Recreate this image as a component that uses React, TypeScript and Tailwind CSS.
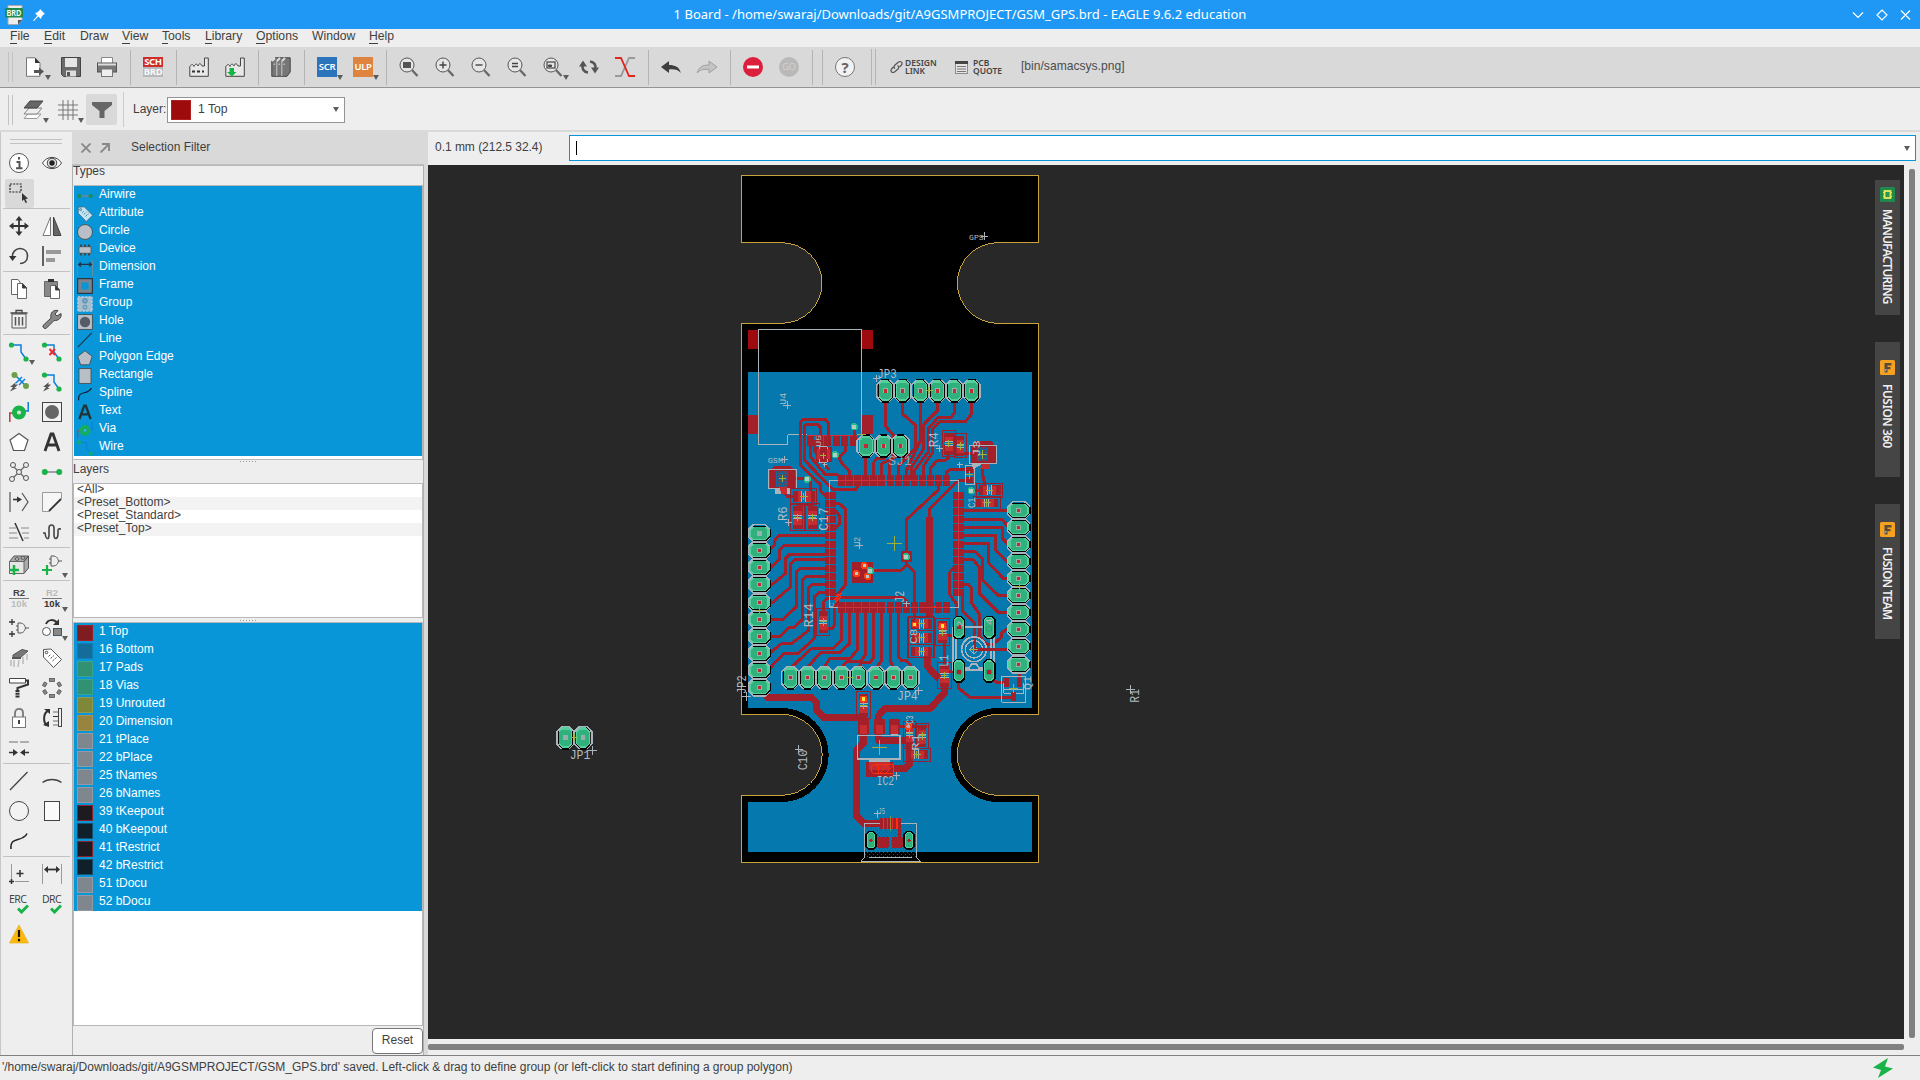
import React from "react";

type Kids = { children?: React.ReactNode };

/* ---------- icon helpers ---------- */

function Ico({ children, size = 20 }: Kids & { size?: number }) {
  return (
    <svg width={size} height={size} viewBox="0 0 20 20" fill="none" stroke="#444" strokeWidth="1" className="block shrink-0 overflow-visible">
      {children}
    </svg>
  );
}

function Tri({ className = "" }: { className?: string }) {
  return (
    <svg width="6" height="5" viewBox="0 0 6 5" className={className}>
      <path d="M0 0H6L3 5Z" fill="#5c5c5c" />
    </svg>
  );
}

function Drop({ children }: Kids) {
  return (
    <div className="relative">
      {children}
      <Tri className="absolute -right-[6px] -bottom-[3px]" />
    </div>
  );
}

function Lens({ children }: Kids) {
  return (
    <Ico>
      <circle cx="8" cy="8" r="7" stroke="#555" fill="#e6e6e6" />
      <path d="M13.2 13.2L18.5 19" stroke="#666" strokeWidth="2.2" />
      {children}
    </Ico>
  );
}

const G = "#19b34a";
const B = "#0b7fdc";

/* ---------- top toolbar icons ---------- */

const iNew = <Ico><path d="M1.5 .8H10L15 6V19.3H1.5Z" fill="#fff" stroke="#777" /><path d="M10 .8V6H15Z" fill="#333" stroke="none" /><path d="M9 13h5v-2.600l5 4-5 4V16H9Z" fill="#555" stroke="none" /></Ico>;
const iSave = <Ico><path d="M.5 .5H19.500V19.500H2.500L.5 17.500Z" fill="#6b6b6b" stroke="#444" /><rect x="4" y="1" width="12" height="9" fill="#e6e6e6" stroke="none" /><rect x="5" y="13.500" width="10" height="6" fill="#ddd" stroke="none" /><rect x="6" y="15" width="3" height="4" fill="#555" stroke="none" /></Ico>;
const iPrint = <Ico><path d="M4.500 6V.5h11V6" fill="#fff" stroke="#888" /><rect x=".5" y="6" width="19" height="9" fill="#777" stroke="#555" /><path d="M1 7.500H19" stroke="#ddd" strokeWidth="2" /><rect x="4.500" y="12" width="11" height="7.500" fill="#eee" stroke="#777" /></Ico>;
const iSch = (
  <div className="h-5 w-5 bg-[#b9b9b9] font-['Noto_Sans'] text-[9.500px] leading-[10px] font-bold tracking-[-0.3px] text-[#fafafa]">
    <div className="h-[10px] bg-[#cf2d2a] text-center">SCH</div>
    <div className="h-[10px] text-center">BRD</div>
  </div>
);
const fac = "M.8 19.300V9.500C2.500 7 4 7 5 9.500C6 6.500 8 6.500 9 9C10 6 11.500 6 13 9L15.500 9V1H19.300V19.300Z";
const iFac1 = <Ico><path d={fac} fill="#e8e8e8" stroke="#444" /><path d="M3 14.500H15" stroke="#333" strokeWidth="2" strokeDasharray="3 2" /></Ico>;
const iFac2 = <Ico><path d={fac} fill="#e8e8e8" stroke="#444" /><path d="M4.500 11h4.500v4h2.500L6.800 19.500 2 15h2.500Z" fill="#12b545" stroke="none" /></Ico>;
const iBooks = <Ico><path d="M.8 4L4 .8H19.200V15L16 19.300H.8Z" fill="#777" stroke="#444" /><path d="M1 4L4 1M6 4L9 1M11 4L14 1" stroke="#ddd" strokeWidth="2" /><path d="M5.800 4V19M10.800 4V19" stroke="#ccc" /><path d="M3.200 6.500V8M8.200 6.500V8M13.200 6.500V8" stroke="#ddd" /></Ico>;
const tag = (bg: string, t: string) => (
  <div className={"flex h-5 w-5 items-center justify-center font-['Noto_Sans'] text-[9.500px] font-semibold tracking-[-0.3px] text-white " + bg}>{t}</div>
);
const iRefresh = <Ico><path d="M9 15.500C4.500 15 2.500 11.500 3.800 7.500" stroke="#555" strokeWidth="2.600" /><path d="M0 9.500L4 3.500L8 9.500Z" fill="#555" stroke="none" /><path d="M11 4.500C15.500 5 17.500 8.500 16.200 12.500" stroke="#555" strokeWidth="2.600" /><path d="M20 10.500L16 16.500L12 10.500Z" fill="#555" stroke="none" /></Ico>;
const iRats = <Ico><path d="M20 1H14L6 19H0" stroke="#999" strokeWidth="1.800" /><path d="M0 1H6L14 19H20" stroke="#e0261c" strokeWidth="1.800" /></Ico>;
const arrowD = "M0 10L8 4V8C14 8 18.500 10 19.800 16C17 12.500 13 12 8 12.500V16Z";
const iUndo = <Ico><path d={arrowD} fill="#3f3f3f" stroke="none" /></Ico>;
const iRedo = <Ico><path d={arrowD} transform="translate(20 0) scale(-1 1)" fill="#c4c4c4" stroke="#a0a0a0" /></Ico>;
const iStop = <Ico><circle cx="10" cy="10" r="10" fill="#dd1f3e" stroke="none" /><path d="M4 10H16" stroke="#fff" strokeWidth="3" /></Ico>;
const iGo = <div className="flex h-5 w-5 items-center justify-center rounded-full bg-[#b9b9b9] font-['Noto_Sans'] text-[9px] text-[#d3d3d3]">GO</div>;
const iHelp = <div className="flex h-5 w-5 items-center justify-center rounded-full border border-[#777] bg-[#f2f2f2] font-['Noto_Sans'] text-[15px] font-bold text-[#666]">?</div>;

const topGroups: React.ReactNode[][] = [
  [<Drop>{iNew}</Drop>, iSave, iPrint],
  [iSch],
  [iFac1, iFac2],
  [iBooks],
  [<Drop>{tag("bg-[#2b73bb]", "SCR")}</Drop>, <Drop>{tag("bg-[#df843f]", "ULP")}</Drop>],
  [
    <Lens><rect x="4" y="5" width="8" height="6" fill="#555" stroke="none" /></Lens>,
    <Lens><path d="M4.500 8H11.500M8 4.500V11.500" strokeWidth="1.400" /></Lens>,
    <Lens><path d="M4.500 8H11.500" strokeWidth="1.400" /></Lens>,
    <Lens><path d="M5 6.500H11M5 9.500H11" strokeWidth="1.300" /></Lens>,
    <Drop><Lens><rect x="4" y="5" width="8" height="6" strokeWidth="1.200" /><path d="M5.500 8h3v1.500h-3z" fill="#555" /></Lens></Drop>,
    iRefresh,
    iRats,
  ],
  [iUndo, iRedo],
  [iStop, iGo],
];

const VSep = () => <div className="h-[35px] w-px shrink-0 bg-[#b4b4b4]" />;
const Grip = () => <div className="ml-2 h-[30px] w-[5px] shrink-0 border-x border-[#c2c2c2]" />;

function TopToolbar() {
  return (
    <div className="flex h-[41px] shrink-0 items-center border-b border-[#949494] bg-[#d9d9d9]">
      <Grip />
      {topGroups.map((g, i) => (
        <React.Fragment key={i}>
          <div className="mr-[13px] ml-3 flex gap-4">
            {g.map((n, j) => <React.Fragment key={j}>{n}</React.Fragment>)}
          </div>
          <VSep />
        </React.Fragment>
      ))}
      <div className="w-[9px]" />
      <VSep />
      <div className="mr-4 ml-3">{iHelp}</div>
      <div className="h-[36px] w-[5px] border-x border-[#b4b4b4]" />
      <div className="ml-[14px] flex items-center font-['Noto_Sans'] text-[8.500px] leading-[8px] font-semibold text-[#444]">
        <svg width="13" height="14" viewBox="0 0 13 14" fill="none" stroke="#555" strokeWidth="1.200">
          <path d="M5 8.500C3.500 7.500 4 6 5 5L8.500 2C11 .5 13 3 11.500 5L9.500 7M7.500 5.500C9 6.500 9 8 8 9L4.500 12C2 13.500 0 11 1.500 9L3.500 7" />
        </svg>
        <div className="ml-[2px] w-[50px]"><div>DESIGN</div><div>LINK</div></div>
        <svg width="13" height="13" viewBox="0 0 13 13"><path d="M0 0H13V13H0Z" fill="#8b8b8b" /><path d="M1 3H12V12H1Z" fill="#e4e4e4" /><path d="M0 0H13V3H0Z" fill="#444" /><path d="M2 5.500H11M2 8H11M2 10.500H11" stroke="#777" /></svg>
        <div className="ml-[5px] w-[48px]"><div>PCB</div><div>QUOTE</div></div>
      </div>
      <span className="pb-px text-[12.100px] text-[#4c4c4c]">[bin/samacsys.png]</span>
    </div>
  );
}

function LayerToolbar() {
  return (
    <div className="flex h-[44px] shrink-0 items-center border-b-2 border-[#d9d9d9] pt-px">
      <Grip />
      <div className="ml-[10px]">
        <Drop>
          <Ico>
            <path d="M1 18.500L5 14H18L14 18.500H1Z" fill="#fff" stroke="#999" />
            <path d="M1 14L6 8H19L14 14Z" fill="#eee" stroke="#888" />
            <path d="M1 8L7 1H20L14 8Z" fill="#666" stroke="#444" />
          </Ico>
        </Drop>
      </div>
      <div className="ml-[15px]">
        <Drop><Ico><path d="M5 0V20M10 0V20M15 0V20M0 5H20M0 10H20M0 15H20" stroke="#777" /></Ico></Drop>
      </div>
      <div className="ml-[8px] flex h-[31px] w-[31px] items-center justify-center rounded-[2px] bg-[#d9d9d9]">
        <svg width="20" height="16" viewBox="0 0 20 16"><path d="M0 0H20V3L12.500 9V16H7.500V9L0 3Z" fill="#666" /></svg>
      </div>
      <div className="ml-[6px] h-[35px] w-px bg-[#ccc]" />
      <span className="ml-[9px] w-[34px] pb-px text-[12px]">Layer:</span>
      <div className="flex h-[26px] w-[178px] items-center border border-[#949494] bg-white pr-[5px] pl-[3px]">
        <div className="h-5 w-5 border border-[#b02020] bg-[#9e0b0d]" />
        <span className="ml-[7px] flex-1 pb-px text-[12.200px]">1 Top</span>
        <Tri />
      </div>
    </div>
  );
}

/* ---------- left tool palette ---------- */

const Dot = ({ x, y, r = 2.600, f = G }: { x: number; y: number; r?: number; f?: string }) => <circle cx={x} cy={y} r={r} fill={f} stroke="none" />;
const bolt = "M7 10L1 15H4L1 19.500L8 16H5.500L9 12.500H6Z";
const viaArt = <><path d="M.8 20V11H6" stroke="#c4373a" strokeWidth="1.500" /><path d="M19.200 0V9H14" stroke={B} strokeWidth="1.500" /><circle cx="10" cy="10.500" r="4.500" stroke={G} strokeWidth="5" /><circle cx="10" cy="10.500" r="1" stroke="#b9dcc4" strokeWidth=".8" /></>;
const wireArt = <><path d="M2 3H12V10L17 17" stroke={B} strokeWidth="1.500" /><Dot x={2.500} y={3} /><Dot x={17} y={17} /></>;
const labelArt = <><path d="M1.500 1.500L9 1 19.500 11.500 11.500 19.500 1.500 9Z" fill="#fff" stroke="#555" /><circle cx="4.500" cy="4.500" r="1.300" fill="#eee" stroke="#555" /><path d="M6.500 8.500L9 6M8.500 10.500L12 7.500M10.500 13L14.500 9.500" stroke="#555" strokeDasharray="2.500 1" /></>;
const rText = (a: string, b: string) => (
  <div className="w-5 text-center text-[9.500px] leading-[10px] font-bold">
    <div className={a + " border-b border-[#777]"}>R2</div>
    <div className={b}>10k</div>
  </div>
);
const check = (t: string) => (
  <div className="relative h-5 w-5 font-['Noto_Sans'] text-[10.500px] leading-[11px] tracking-[-0.6px] text-[#444]">
    {t}
    <svg width="12" height="10" viewBox="0 0 12 10" className="absolute right-0 bottom-0"><path d="M1 4.500L4.500 8L11 1.500" fill="none" stroke={G} strokeWidth="3" /></svg>
  </div>
);
const gate = (x: number, y: number) => <path transform={`translate(${x} ${y})`} d="M2 0H4C8 0 9 3 9.500 5C9 7 8 10 4 10H2ZM9.500 5H13M0 3H2M0 7H2" stroke="#555" />;

const sections: React.ReactNode[][] = [
  [
    <Ico><circle cx="10" cy="10" r="9.500" fill="#fff" stroke="#555" /><path d="M10 4V6.500M7.500 9H10.500V15M7 15.200H13.500" stroke="#555" strokeWidth="2" /></Ico>,
    <Ico><path d="M.5 10C5 2.500 15 2.500 19.500 10C15 17.500 5 17.500 .5 10Z" fill="#fff" /><circle cx="10" cy="10" r="4.800" fill="#ddd" /><circle cx="10" cy="10" r="2.700" fill="#222" stroke="none" /></Ico>,
    <div className="flex h-[29px] w-[29px] items-center justify-center rounded-[2px] bg-[#d9d9d9]"><Ico><path d="M1 1H12V9H1Z" strokeDasharray="2 1.200" stroke="#222" strokeWidth="1.200" /><path d="M13 10V18L15 16.500L16.500 20L18 19.500L16.500 16L19 15.500Z" fill="#333" stroke="none" /></Ico></div>,
    null,
  ],
  [
    <Ico><path d="M10 2V18M2 10H18" stroke="#333" strokeWidth="1.800" /><path d="M10 0L13.500 4.500H6.500ZM10 20L13.500 15.500H6.500ZM0 10L4.500 6.500V13.500ZM20 10L15.500 6.500V13.500Z" fill="#333" stroke="none" /></Ico>,
    <Ico><path d="M1 19.500L8.500 1V19.500Z" fill="#fff" stroke="#777" /><path d="M11.500 1V19.500H19Z" fill="#666" stroke="#444" /></Ico>,
    <Ico><path d="M3.500 11C3 6 7 2.500 11 2.500C16 2.500 18.500 6 18.500 10C18.500 15 15 17.500 11 17.500" stroke="#444" strokeWidth="1.600" /><path d="M0 10H7.500L3.500 15Z" fill="#333" stroke="none" /></Ico>,
    <Ico><path d="M1 0V20" stroke="#333" strokeWidth="1.500" /><path d="M4 4H19V8H4ZM4 12H13V16H4Z" fill="#999" stroke="none" /></Ico>,
  ],
  [
    <Ico><path d="M2.500 .5H9L11 3V15.500H2.500Z" fill="#fff" stroke="#666" /><path d="M8.500 4.500H13.500L17.500 9V19.500H8.500Z" fill="#fff" stroke="#666" /><path d="M13.500 4.500V9H17.500Z" fill="#333" /></Ico>,
    <Ico><path d="M2.500 2.500H15.500V17.500H2.500Z" fill="#888" stroke="#666" /><path d="M6 0H12V3H6Z" fill="#333" stroke="none" /><path d="M8.500 6.500H13.500L17.500 11V19.500H8.500Z" fill="#fff" stroke="#666" /><path d="M13.500 6.500V11H17.500Z" fill="#333" /></Ico>,
    <Ico><path d="M3 5H17V19H3Z" fill="#eee" stroke="#555" /><path d="M1.500 4H18.500M7 4V1.500H13V4" strokeWidth="1.300" /><path d="M6.500 8V16.500M10 8V16.500M13.500 8V16.500" stroke="#555" strokeWidth="1.500" /></Ico>,
    <Ico><path d="M1 16.500L9 9C8 4 11 .5 16 1.500L13 5L15 7L19 4.500C20 9 16 12 12 11.500L4 19.500C2 20 .5 18 1 16.500Z" fill="#888" stroke="#444" /></Ico>,
  ],
  [
    <Drop><Ico>{wireArt}</Ico></Drop>,
    <Ico>{wireArt}<path d="M7.500 7L13 13M13 7L7.500 13" stroke="#f02a2a" strokeWidth="2" /></Ico>,
    <Ico><path d="M6 3L17 14M7 11L13 5M10 13L16 7" stroke={B} strokeWidth="1.500" /><Dot x={5.500} y={3} r={3} f="#6aa04a" /><Dot x={17} y={14} r={3} f="#6aa04a" /><path d={bolt} fill="#555" stroke="none" /></Ico>,
    <Ico>{wireArt}<path d={bolt} fill="#555" stroke="none" /></Ico>,
    <Ico>{viaArt}</Ico>,
    <Ico><rect x=".5" y=".5" width="19" height="19" fill="#f3f3f3" /><circle cx="10" cy="10" r="7" fill="#666" stroke="none" /></Ico>,
    <Ico><path d="M10 1.500L19 8L15.500 18.500H4.500L1 8Z" fill="#fff" stroke="#555" strokeWidth="1.200" /></Ico>,
    <Ico><path d="M3 19L9 2H11L17 19M5.500 13H14.500" stroke="#333" strokeWidth="2.800" /></Ico>,
    <Ico><path d="M3 17L10 10L17 3M4 4L16 16" stroke="#666" strokeWidth="1.300" /><g fill="#eee" stroke="#555"><circle cx="10" cy="10" r="2.500" /><circle cx="4" cy="3" r="2.500" /><circle cx="17" cy="3" r="2.500" /><circle cx="3" cy="17" r="2.500" /><circle cx="17" cy="16" r="2.500" /></g></Ico>,
    <Ico><path d="M3 10H17" stroke="#888" strokeWidth="1.500" /><Dot x={2.800} y={10} r={3} /><Dot x={17.200} y={10} r={3} /></Ico>,
    <Ico><path d="M1 0V20M13 1L19 10L13 19" stroke="#555" strokeWidth="1.200" /><path d="M4 7.500H9" strokeWidth="1.600" stroke="#333" /><path d="M8 4.500L13 7.500L8 10.500Z" fill="#333" stroke="none" /></Ico>,
    <Ico><path d="M19.500 7V.5H.5V19.500H7" fill="#f6f6f6" stroke="#999" /><path d="M7 19L19 7" stroke="#333" strokeWidth="1.800" /></Ico>,
    <Ico><path d="M0 6H7M12 6H20M0 11H8M13 11H20M0 16H9M15 16H20" stroke="#aaa" strokeWidth="1.300" /><path d="M6 1L14 19" stroke="#333" strokeWidth="1.500" /></Ico>,
    <Ico><path d="M1 11H3C4 18 7 18 7 13V6C7 2 12 2 12 6V13C12 18 16 18 16 11V9C16 6 17 7 19 7" stroke="#444" strokeWidth="1.600" /></Ico>,
  ],
  [
    <Ico><path d="M.5 6.500L5 1H19.500V13L15 18.500H.5Z" fill="#aaa" stroke="#555" /><path d="M.5 6.500H15V18.500H.5Z" fill="#e6e6e6" stroke="#666" /><path d="M15 6.500L19.500 1" /><ellipse cx="8" cy="4" rx="2" ry="1.200" fill="#eee" /><ellipse cx="14" cy="3" rx="2" ry="1.200" fill="#eee" /><path d="M5 10V20M0 15H10" stroke={G} strokeWidth="2.500" /></Ico>,
    <Drop><Ico>{gate(7, 1)}<path d="M5 10V20M0 15H10" stroke={G} strokeWidth="2.200" /></Ico></Drop>,
  ],
  [
    rText("text-[#444]", "text-[#bbb]"),
    <Drop>{rText("text-[#bbb]", "text-[#333]")}</Drop>,
    <Ico>{gate(7, 5)}<path d="M3 1V7M0 4H6M3 13V19M0 16H6" stroke="#333" strokeWidth="1.300" /></Ico>,
    <Drop><Ico><circle cx="4.500" cy="13.500" r="4" fill="#fff" stroke="#555" /><rect x="11.500" y="10.500" width="8" height="7" fill="#888" stroke="#456" /><path d="M4 6C6 1 12 1 15 5" stroke="#333" strokeWidth="2" /><path d="M17 1V7H11Z" fill="#333" stroke="none" /></Ico></Drop>,
    <Ico><path d="M4 7L13 1.500L19 3L11 10H4Z" fill="#777" stroke="#555" /><path d="M2 12V18M5 12V19M10 12L9 19M14 9V16M18 6V12" stroke="#bbb" strokeWidth="1.500" /><path d="M3 10H12" stroke="#555" strokeWidth="2" /></Ico>,
    <Ico>{labelArt}</Ico>,
    <Ico><path d="M.5 .5H16.500V5H.5Z" fill="#fff" /><path d="M16.500 2.500H19V6.500L8.500 10V12" stroke="#333" strokeWidth="2" /><path d="M8.500 12V20" stroke="#333" strokeWidth="4" strokeDasharray="2 .8" /></Ico>,
    <Ico><g fill="#888" stroke="#555" strokeWidth=".8"><rect x="7.500" y=".5" width="5" height="3" /><rect x="7.500" y="16.500" width="5" height="3" /><rect x="1.500" y="4.500" width="3" height="4" transform="rotate(30 3 6)" /><rect x="15.500" y="4.500" width="3" height="4" transform="rotate(-30 17 6)" /><rect x="1.500" y="12" width="3" height="4" transform="rotate(-30 3 14)" /><rect x="15.500" y="12" width="3" height="4" transform="rotate(30 17 14)" /></g></Ico>,
    <Ico><path d="M6 9V5C6 -.5 14 -.5 14 5V9" stroke="#777" strokeWidth="1.800" /><rect x="3.500" y="9" width="13" height="10.500" fill="#fff" stroke="#777" /><path d="M10 12V16" strokeWidth="2" /></Ico>,
    <Ico><path d="M6 3C1 5 1 15 5 17" stroke="#333" strokeWidth="2" /><path d="M2 1H8V6ZM1 17L7 19V13Z" fill="#333" stroke="none" /><path d="M11 4H16M11 13H16M11 17H16" stroke="#999" strokeWidth="1.500" /><path d="M11 8.500H16" stroke="#333" /><rect x="16.500" y=".5" width="3" height="18" fill="#eee" /></Ico>,
    <Ico><path d="M0 4H9M11 4H20" stroke="#999" strokeWidth="1.500" /><path d="M0 14.500H5M20 14.500H15" stroke="#333" strokeWidth="1.500" /><path d="M4 11L9 14.500L4 18ZM16 11L11 14.500L16 18Z" fill="#333" stroke="none" /></Ico>,
    null,
  ],
  [
    <Ico><path d="M1 19L18.500 1" strokeWidth="1.300" /></Ico>,
    <Ico><path d="M.5 11.500C6 7.500 14 7.500 19.500 11.500" strokeWidth="1.400" /></Ico>,
    <Ico><circle cx="10" cy="10" r="9.500" fill="#f3f3f3" /></Ico>,
    <Ico><rect x="2.500" y=".5" width="15" height="19" fill="#fafafa" /></Ico>,
    <Ico><path d="M2 18C1 7 9 10 14 6.500C17 5 17.500 4 18 2.500" stroke="#222" strokeWidth="1.500" /></Ico>,
    null,
  ],
  [
    <Ico><path d="M2.500 0V15M6 17.500H20" stroke="#999" /><path d="M11 6V13M7.500 9.500H14.500M2.500 15V20M0 17.500H5" stroke="#333" strokeWidth="1.500" /></Ico>,
    <Ico><path d="M.5 0V20M19.500 0V20" stroke="#999" /><path d="M4 5.500H16" stroke="#333" strokeWidth="1.800" /><path d="M2 5.500L6 2V9ZM18 5.500L14 2V9Z" fill="#333" stroke="none" /></Ico>,
    check("ERC"),
    check("DRC"),
    <Ico><path d="M10 1L19.500 19H.5Z" fill="#fdb90b" stroke="#e8b22f" strokeWidth=".8" /><path d="M10 6V13M10 14.800V17.300" stroke="#111" strokeWidth="2.200" /></Ico>,
    null,
  ],
];

function Palette() {
  return (
    <div className="flex w-[72px] shrink-0 flex-col border-l border-[#c8c8c8] pt-[7px]">
      <div className="mb-1 ml-[9px] h-[5px] w-[52px] border-y border-[#c2c2c2]" />
      {sections.map((s, i) => (
        <React.Fragment key={i}>
          {i > 0 && <div className="mx-[2px] h-[3px] border-t border-[#c2c2c2]" />}
          <div className="ml-[1.500px] grid w-[66px] grid-cols-2">
            {s.map((n, j) => <div key={j} className="flex h-[30px] items-center justify-center">{n}</div>)}
          </div>
        </React.Fragment>
      ))}
    </div>
  );
}

/* ---------- selection filter panel ---------- */

const types: [string, React.ReactNode][] = [
  ["Airwire", <><path d="M3 10H17" stroke="#888" strokeWidth="1.500" /><Dot x={2.800} y={10} f="#1d8c50" /><Dot x={17.200} y={10} f="#1d8c50" /></>],
  ["Attribute", <g opacity=".75">{labelArt}</g>],
  ["Circle", <circle cx="10" cy="10" r="9.300" fill="#b9bfc7" />],
  ["Device", <><rect x="2.500" y="6" width="15" height="8" fill="#b9bfc7" stroke="#555" /><path d="M5 3V6M10 3V6M15 3V6M5 14V17M10 14V17M15 14V17" stroke="#444" strokeWidth="2.500" /></>],
  ["Dimension", <><path d="M.5 0V20M19.500 0V20" stroke="#888" /><path d="M2 5.500H18M5 3L2 5.500L5 8M15 3L18 5.500L15 8" stroke="#234" strokeWidth="1.600" /></>],
  ["Frame", <><rect x="3" y="3" width="14" height="14" stroke="#7d828b" strokeWidth="5" /><rect x=".8" y=".8" width="18.400" height="18.400" stroke="#234" strokeWidth="1.400" /></>],
  ["Group", <><rect x="1" y="1" width="18" height="18" fill="#a9bccb" stroke="#dde" strokeDasharray="3 1.500" /><circle cx="10" cy="6" r="3" fill="#6fa9cd" stroke="#48a" /><circle cx="10" cy="14" r="2.500" fill="#8fb9d5" stroke="#48a" /></>],
  ["Hole", <><rect x=".8" y=".8" width="18.400" height="18.400" fill="#b9bfc7" /><circle cx="10" cy="10" r="6.500" fill="#555c66" stroke="none" /></>],
  ["Line", <path d="M1 19L18.500 1" stroke="#234" strokeWidth="1.400" />],
  ["Polygon Edge", <path d="M10 1L19 8L15.500 18.500H4.500L1 8Z" fill="#b9bfc7" />],
  ["Rectangle", <rect x="2.500" y=".8" width="15" height="18.400" fill="#b9bfc7" />],
  ["Spline", <path d="M2 18C1 7 9 10 14 6.500C17 5 17.500 4 18 2.500" stroke="#123" strokeWidth="1.500" />],
  ["Text", <path d="M3 19L9 2H11L17 19M5.500 13H14.500" stroke="#233" strokeWidth="3" />],
  ["Via", <g opacity=".8">{viaArt}</g>],
  ["Wire", <g opacity=".75">{wireArt}</g>],
];

const layers: [string, string][] = [
  ["1 Top", "bg-[#7f1c22] border-[#9c2128]"],
  ["16 Bottom", "bg-[#146c9b] border-[#0f7fb5]"],
  ["17 Pads", "bg-[#319170] border-[#3aa588]"],
  ["18 Vias", "bg-[#319170] border-[#3aa588]"],
  ["19 Unrouted", "bg-[#7f8838] border-[#8f9b4e]"],
  ["20 Dimension", "bg-[#96843f] border-[#a89357]"],
  ["21 tPlace", "bg-[#80868e] border-[#939aa0]"],
  ["22 bPlace", "bg-[#80868e] border-[#939aa0]"],
  ["25 tNames", "bg-[#80868e] border-[#939aa0]"],
  ["26 bNames", "bg-[#80868e] border-[#939aa0]"],
  ["39 tKeepout", "bg-[#1d1a20] border-[#8a2229]"],
  ["40 bKeepout", "bg-[#10202b] border-[#17506e]"],
  ["41 tRestrict", "bg-[#1d1a20] border-[#8a2229]"],
  ["42 bRestrict", "bg-[#10202b] border-[#17506e]"],
  ["51 tDocu", "bg-[#80868e] border-[#939aa0]"],
  ["52 bDocu", "bg-[#80868e] border-[#939aa0]"],
];

const SplitDots = () => (
  <div className="flex items-center justify-center gap-[2px]">
    {[0, 1, 2, 3, 4, 5].map((i) => <span key={i} className="h-px w-px bg-[#999]" />)}
  </div>
);

function FilterPanel() {
  return (
    <div className="flex w-[356px] shrink-0 flex-col bg-[#d9d9d9] pr-1">
      <div className="flex h-[33px] shrink-0 items-center border-b border-[#c0c0c0] pb-[3px] pl-[9px]">
        <svg width="10" height="10" viewBox="0 0 10 10" className="mt-[3px]"><path d="M.5 .5L9.500 9.500M9.500 .5L.5 9.500" stroke="#888" strokeWidth="1.800" /></svg>
        <svg width="10" height="10" viewBox="0 0 10 10" className="mt-[3px] ml-[9px]"><path d="M.5 9.500L9 1M2 1H9V8" fill="none" stroke="#888" strokeWidth="1.900" /></svg>
        <span className="ml-[21px] text-[12px]">Selection Filter</span>
      </div>
      <div className="flex min-h-0 flex-1 flex-col border border-b-0 border-[#b0b0b0] border-t-[#b8b8b8] bg-[#eee]">
        <div className="h-[19px] shrink-0 text-[12px] leading-[11px]">Types</div>
        <div className="h-[275px] shrink-0 border border-[#b8b8b8] border-l-[#eee] bg-white">
          {types.map(([name, art]) => (
            <div key={name} className="flex h-[18px] items-center bg-[#0896d9] pl-[3px] text-[12px] leading-[15px] text-white">
              <div className="mt-[1px]"><Ico size={16}>{art}</Ico></div>
              <span className="ml-[6px] pb-[2px]">{name}</span>
            </div>
          ))}
        </div>
        <div className="flex h-[3px] items-center justify-center"><SplitDots /></div>
        <div className="h-[20px] shrink-0 text-[12px] leading-[13px]">Layers</div>
        <div className="h-[135px] shrink-0 border border-[#b8b8b8] bg-white">
          {["<All>", "<Preset_Bottom>", "<Preset_Standard>", "<Preset_Top>"].map((t) => (
            <div key={t} className="h-[13px] pl-[3px] text-[12px] leading-[11px] even:bg-[#f3f3f3]">{t}</div>
          ))}
        </div>
        <div className="flex h-[4px] items-center justify-center"><SplitDots /></div>
        <div className="h-[404px] shrink-0 border border-[#b8b8b8] bg-white">
          {layers.map(([name, c]) => (
            <div key={name} className="flex h-[18px] items-center bg-[#0896d9] pl-[3px] text-[12px] leading-[15px] text-white">
              <div className={"mt-[1px] h-4 w-4 border " + c} />
              <span className="ml-[6px] pb-[2px]">{name}</span>
            </div>
          ))}
        </div>
        <div className="flex flex-1 justify-end pt-[2px]">
          <div className="flex h-[26px] w-[51px] items-center justify-center rounded-[4px] border border-[#777] bg-white pb-[2px] text-[12px]">Reset</div>
        </div>
      </div>
    </div>
  );
}

/* ---------- board drawing: 3 units per screen pixel ---------- */

const RED = "#a3202a";
const HOT = "#c52d30";
const SILK = "#a9b3bb";
const YEL = "#9fb13a";

function oct(x: number, y: number, w: number, h: number, k = 0.55) {
  const c = Math.min(w, h) * k;
  return `M${x - w + c},${y - h}H${x + w - c}L${x + w},${y - h + c}V${y + h - c}L${x + w - c},${y + h}H${x - w + c}L${x - w},${y + h - c}V${y - h + c}Z`;
}

function Pad({ x, y, flat, hole = "#c22a33" }: { x: number; y: number; flat?: boolean; hole?: string }) {
  const w = flat ? 31 : 20;
  const h = flat ? 20 : 31;
  return (
    <g>
      <path d={oct(x, y, w + (flat ? 5 : 2), h + (flat ? 2 : 5))} fill="#000" />
      <path d={flat ? oct(x, y, 31, 26, 0.5) : oct(x, y, 26, 31, 0.5)} fill="none" stroke={SILK} strokeWidth="5" />
      <path d={oct(x + 1, y + 1, w + 1, h + 2)} fill="#000" />
      <path d={oct(x, y, w, h)} fill="#56cfa0" />
      {flat ? <path d={oct(x, y, w - 7, h - 2, 0.4)} fill="#2fb07c" /> : <path d={oct(x, y, w - 2, h - 7, 0.4)} fill="#2fb07c" />}
      <rect x={x - 7} y={y - 7} width="14" height="14" fill="#8fb5a8" />
      <rect x={x - 4.500} y={y - 4.500} width="10" height="10" fill={hole} />
    </g>
  );
}

function SPad({ x, y, w = 15, h = 31 }: { x: number; y: number; w?: number; h?: number }) {
  return (
    <g>
      <path d={oct(x + 1, y + 1, w + 4, h + 4)} fill="#000" />
      <path d={oct(x, y, w, h)} fill="#56cfa0" />
      <path d={oct(x, y, w - 3, h - 4)} fill="#2fb07c" />
      <circle cx={x} cy={y + 4} r="8" fill="none" stroke="#2a9a72" strokeWidth="3" />
    </g>
  );
}

const Cross = ({ x, y, r = 11, c = SILK }: { x: number; y: number; r?: number; c?: string }) => (
  <path d={`M${x - r},${y}H${x + r}M${x},${y - r}V${y + r}`} stroke={c} strokeWidth="3" fill="none" />
);

function Label({ x, y, t, s = 40, len, up }: { x: number; y: number; t: string; s?: number; len: number; up?: boolean }) {
  return (
    <text x="0" y="0" transform={`translate(${x} ${y})${up ? " rotate(-90)" : ""}`} fontFamily="'Liberation Mono', monospace" fontSize={s} textLength={len} lengthAdjust="spacingAndGlyphs" fill="#b4bcc2">
      {t}
    </text>
  );
}

function Part({ x, y, w, h, tall, hot }: { x: number; y: number; w: number; h: number; tall?: boolean; hot?: boolean }) {
  const p = 6;
  const iw = w - 2 * p;
  const ih = h - 2 * p;
  const cx = x + w / 2;
  const cy = y + h / 2;
  return (
    <g>
      <rect x={x} y={y} width={w} height={h} fill="none" stroke="#9a1f2c" strokeWidth="3" />
      {tall ? (
        <>
          <rect x={x + p} y={y + p} width={iw} height={ih * 0.43} fill={RED} />
          <rect x={x + p} y={y + p + ih * 0.57} width={iw} height={ih * 0.43} fill={RED} />
          <rect x={x + p + 1} y={y + h * 0.26} width={iw - 2} height={h * 0.18} fill={HOT} />
          <rect x={x + p + 1} y={y + h * 0.56} width={iw - 2} height={h * 0.24} fill={HOT} />
          <path d={`M${x + p + 2},${cy - 5}H${x + w - p - 2}M${x + p + 2},${cy + 5}H${x + w - p - 2}`} stroke={SILK} strokeWidth="3" />
        </>
      ) : (
        <>
          <rect x={x + p} y={y + p} width={iw * 0.43} height={ih} fill={RED} />
          <rect x={x + p + iw * 0.57} y={y + p} width={iw * 0.43} height={ih} fill={RED} />
          <rect x={x + w * 0.26} y={y + p + 1} width={w * 0.18} height={ih - 2} fill={HOT} />
          <rect x={x + w * 0.56} y={y + p + 1} width={w * 0.2} height={ih - 2} fill={HOT} />
          <path d={`M${cx - 6},${y + p}V${y + h - p}M${cx + 6},${y + p}V${y + h - p}`} stroke={SILK} strokeWidth="3" />
        </>
      )}
      <Cross x={cx} y={cy} r={11} c={YEL} />
      {hot && <><rect x={cx - 10} y={y + 12} width="20" height="20" fill="#ff3a10" /><rect x={cx - 5} y={y + 17} width="10" height="10" fill="#ffe53a" /></>}
    </g>
  );
}

const Via = ({ x, y }: { x: number; y: number }) => (
  <g><circle cx={x} cy={y} r="11" fill="#25b98b" /><rect x={x - 6} y={y - 6} width="12" height="12" fill="#b5ccc2" /></g>
);

const outline =
  "M19,-734H911V-532H788A121,121 0 0 0 788,-290H911V883H788A121.500,121.500 0 0 0 788,1126H911V1327H19V1126H140A121.500,121.500 0 0 0 140,883H19V-290H140A121,121 0 0 0 140,-532H19Z";

const thin = [
  "M73,391H103L120,374V360L132,347H275",
  "M73,442H108L135,415V388L146,377H275",
  "M73,493H112L152,460V415L163,404H275",
  "M73,548H112L168,500V430L178,420H275",
  "M73,598H145L184,560V455L196,445H275",
  "M73,649H135L162,622H178L203,598V480L213,469H275",
  "M73,700H105L137,672H168L220,632V505L230,494H275",
  "M73,751H98L148,700H190L238,655V530L252,518H285",
  "M166,773V745L227,687H292L320,660V570",
  "M217,773V742L257,698H315L344,670V570",
  "M268,773V742L285,715H345L368,690V570",
  "M319,773V745L335,725H375L392,705V570",
  "M371,773V742L380,728H405L417,712V570",
  "M423,773V742L441,722V570",
  "M475,773V742L466,722V570",
  "M526,773V735L515,722H500L490,710V570",
  "M680,273H851",
  "M680,298H800L822,322H851",
  "M680,322H802V355L820,373H851",
  "M680,346H782V390L815,424H851",
  "M680,371H762V430L805,475H851",
  "M680,396H722L744,420V482L790,526H851",
  "M680,420H715L733,440V520L790,577H851",
  "M680,493H700L710,505V548L735,585V650L755,673H775L800,650V638L815,628H851",
  "M672,445H655L645,455V525L665,552V615",
  "M682,520V572L720,610V688H840",
  "M280,60V8L270,-3H205L196,6V135L258,195V215L270,227H290",
  "M256,60V22L248,13H214L208,20V120L285,200L295,208H362L370,198V180",
  "M226,60V110L272,165H308L320,180",
  "M240,60V95L282,150",
  "M332,60V92L312,112L320,128L344,155V180",
  "M358,20V60",
  "M451,-88V18L475,45V110L465,128V180",
  "M503,-88V-18L541,15V85L490,138V180",
  "M556,-88V62L515,150V180",
  "M607,-88V-28L567,12V85L530,140V180",
  "M658,-88V-20L648,-8H610L580,25V95L540,150V180",
  "M710,-88V-18L692,4H615L592,28V98L565,140V180",
  "M392,79V180",
  "M446,79V115H425L417,125V180",
  "M496,79V105L441,130V180",
  "M642,90V112L628,123H605L588,142V180",
  "M635,180V156L645,149H703",
  "M676,90V102H725",
  "M743,100V165L752,205",
  "M142,175H217L228,190V230",
  "M145,215L158,230H205",
  "M232,230V290M187,260V290M186,255H232",
  "M295,250H312L332,268V495L305,525",
  "M295,275H305L315,290V310L305,322H290",
  "M612,190V208L515,298V435L498,452H406",
  "M513,430L540,458V615",
  "M700,183H668L585,265V300",
  "M305,533H505L515,545",
  "M265,580V548L275,535H305",
  "M280,627H292L300,612V560L310,540",
  "M708,212H740",
  "M628,640V760",
  "M622,640L671,655",
  "M671,760V805L705,832H835",
  "M762,770L785,787H815",
  "M853,734V790",
  "M660,755H620",
  "M495,1200V1250",
  "M495,920H520M500,920H575",
];

const thick = [
  "M73,802L100,833H230L245,848V870L267,893H385V940",
  "M385,930V970L364,992V1187L388,1211H450",
  "M628,800V820L585,865H450L432,885V962H520",
  "M578,690V740L612,775",
  "M583,290V590",
  "M455,1047H508L525,1030V970",
];

const row = (n: number) => Array.from({ length: n }, (_, i) => i);

function Board() {
  return (
    <svg width="1476" height="874" viewBox="428 165 1476 874" className="block" shapeRendering="crispEdges">
      <defs>
        <pattern id="dots" width="12" height="12" patternUnits="userSpaceOnUse"><path d="M0,0h3v3h-3zM6,6h3v3h-3z" fill="#a3202a" /></pattern>
        <pattern id="mesh" width="9" height="9" patternUnits="userSpaceOnUse"><path d="M0,0h6v6h-6z" fill="#a3202a" /></pattern>
      </defs>
      <g transform="translate(735 420) scale(0.333333)">
        <path d={outline} fill="#000" />
        <path d="M39,-144H891V864H788A141,141 0 0 0 788,1146H891V1296H39V1146H140A141,141 0 0 0 140,864H39Z" fill="#0578ad" />
        <path d={outline} fill="none" stroke="#c9a43a" strokeWidth="3" />

        {/* connector module top left */}
        <g fill="#9e0b0f">
          <rect x="39" y="-270" width="33" height="57" /><rect x="380" y="-270" width="34" height="57" />
        </g>
        <g fill={RED}>
          <rect x="39" y="-15" width="33" height="57" /><rect x="380" y="-15" width="34" height="57" />
          {row(6).map((i) => <rect key={i} x={216 + i * 25.800} y="46" width="21" height="32" />)}
        </g>
        <path d="M380,45V-272H70V73H158V45H216" fill="none" stroke={SILK} strokeWidth="3" />
        <path d="M216,46H366" fill="none" stroke="#d0303a" strokeWidth="3" />

        <g fill="none" stroke={RED} strokeWidth="9" strokeLinejoin="round">{thin.map((d) => <path key={d} d={d} />)}</g>
        <g fill="none" stroke={RED} strokeWidth="21" strokeLinejoin="round">{thick.map((d) => <path key={d} d={d} />)}</g>

        {/* main module */}
        <g fill={RED}>
          {row(14).map((i) => <rect key={i} x={309 + i * 24.300} y="166" width="21" height="32" />)}
          {row(14).map((i) => <rect key={i} x={309 + i * 24.300} y="546" width="21" height="33" />)}
          {row(13).map((i) => <rect key={i} x="270" y={216 + i * 24.300} width="33" height="21" />)}
          {row(13).map((i) => <rect key={i} x="654" y={216 + i * 24.300} width="33" height="21" />)}
        </g>
        <path d="M309,182H283V562H309M645,182H671V216M671,528V562H645" fill="none" stroke={SILK} strokeWidth="3" />
        <path d="M309,182H645M309,562H645M283,216V528M671,216V528" fill="none" stroke="#d0303a" strokeWidth="3" />
        <Cross x={478} y={370} r={23} c={YEL} />
        <rect x="351" y="427" width="63" height="62" fill={RED} />
        <rect x="498" y="393" width="33" height="33" fill={RED} />
        {[[388, 437], [364, 461], [398, 469]].map(([a, b]) => <g key={a}><circle cx={a} cy={b} r="11" fill="#ff3b12" /><rect x={a - 5} y={b - 5} width="10" height="10" fill="#b5ccc2" /></g>)}
        <Via x={406} y={452} /><Via x={514} y={410} /><Via x={217} y={178} /><Via x={301} y={104} /><Via x={358} y={20} /><Via x={709} y={212} />
        <path d="M298,540L320,520M300,548L318,530M300,530L312,522" stroke="#ff2d0c" strokeWidth="4" />
        <rect x="598" y="558" width="6" height="6" fill="#ff2d0c" />

        {/* headers */}
        {[451, 503, 556, 607, 658, 710].map((x) => <Pad key={x} x={x} y={-88} />)}
        {[393, 446, 496].map((x) => <Pad key={x} x={x} y={78} />)}
        {[166, 217, 268, 319, 371, 423, 475, 526].map((x) => <Pad key={x} x={x} y={773} />)}
        {[340, 391, 442, 493, 548, 598, 649, 700, 751, 802].map((y) => <Pad key={y} x={73} y={y} flat hole={y === 340 ? "#8fb5b8" : undefined} />)}
        {[271, 322, 373, 424, 475, 526, 577, 628, 679, 734].map((y) => <Pad key={y} x={851} y={y} flat />)}
        <Pad x={-509} y={953} hole="#a0aaa8" /><Pad x={-456} y={953} hole="#a0aaa8" />
        <Cross x={-482} y={953} c={YEL} /><Cross x={582} y={-88} c={YEL} /><Cross x={73} y={571} c={YEL} /><Cross x={345} y={773} c={YEL} /><Cross x={853} y={500} r={14} c={YEL} /><Cross x={380} y={45} r={14} c={YEL} />

        {/* antenna connectors */}
        <g>
          <path d="M105,152L120,138H165L181,150V204H105Z" fill={RED} /><rect x="124" y="152" width="36" height="48" fill="#0f6a9c" /><rect x="124" y="152" width="36" height="48" fill="url(#mesh)" opacity=".5" />
          <path d="M101,148H185V206H101Z" fill="none" stroke={SILK} strokeWidth="3" />
          <path d="M121,204H165V222H121Z" fill={SILK} /><path d="M132,200H155V222H140Z" fill={HOT} /><Cross x={142} y={175} c={YEL} />
          <path d="M708,78L725,62H768L783,80V130H708Z" fill={RED} /><rect x="727" y="80" width="32" height="44" fill="#0f6a9c" /><rect x="727" y="80" width="32" height="44" fill="url(#mesh)" opacity=".6" />
          <path d="M705,76H785V132H705Z" fill="none" stroke={SILK} strokeWidth="3" />
          <path d="M712,132H745L712,148Z" fill={SILK} /><path d="M740,132H765V148H735Z" fill={HOT} /><Cross x={742} y={103} r={14} c={YEL} />
        </g>

        {/* passives */}
        <Part x={168} y={207} w={78} h={46} />
        <Part x={167} y={252} w={42} h={80} tall />
        <Part x={212} y={252} w={42} h={80} tall />
        <rect x="243" y="80" width="48" height="46" fill={RED} /><path d="M253,80H277V127H253Z" fill="none" stroke={SILK} strokeWidth="3" /><path d="M250,88V118M281,88V118" stroke={HOT} strokeWidth="8" /><Cross x={265} y={108} r={9} c={YEL} />
        <Part x={622} y={32} w={40} h={78} tall />
        <Part x={658} y={42} w={36} h={72} tall />
        <path d="M692,136H718V194H692Z" fill="none" stroke={SILK} strokeWidth="3" /><rect x="694" y="140" width="20" height="20" fill={RED} /><rect x="694" y="170" width="20" height="20" fill={RED} /><Cross x={703} y={165} c={YEL} />
        <Part x={725} y={190} w={78} h={42} />
        <Part x={716} y={230} w={80} h={38} />
        <Part x={245} y={566} w={40} h={80} tall />
        <rect x="519" y="592" width="80" height="122" fill="none" stroke="#9a1f2c" strokeWidth="3" />
        <Part x={521} y={590} w={76} h={42} /><Part x={521} y={632} w={76} h={42} /><Part x={521} y={674} w={76} h={40} />
        <rect x="530" y="605" width="17" height="17" fill="#ff3a10" /><rect x="534" y="609" width="9" height="9" fill="#ffe53a" />
        <Part x={603} y={596} w={40} h={80} tall hot />
        <Part x={608} y={728} w={41} h={78} tall />
        <Part x={366} y={815} w={40} h={81} tall hot />
        <Part x={505} y={904} w={36} h={76} tall />
        <circle cx="520" cy="919" r="11" fill="#ff3b12" /><circle cx="520" cy="919" r="6" fill={SILK} />
        <Part x={544} y={910} w={36} h={76} tall />
        <Part x={506} y={985} w={80} h={39} />

        {/* tactile button */}
        <g fill="none" stroke={SILK}>
          <path d="M655,622V752M664,640V730M778,622V752M769,640V730M690,622H745M690,745H702L710,732H724L732,745H745" strokeWidth="5" />
          <path d="M682,750H752" strokeWidth="5" />
          <circle cx="717" cy="688" r="37" strokeWidth="5" /><circle cx="717" cy="688" r="26" strokeWidth="4" /><path d="M717,674L731,688L717,702L703,688Z" strokeWidth="3" />
        </g>
        <SPad x={671} y={622} /><SPad x={762} y={622} /><SPad x={671} y={752} /><SPad x={762} y={752} />
        {[[671, 622], [671, 756], [762, 756]].map(([a, b]) => <rect key={a + b} x={a - 6} y={b - 6} width="12" height="12" fill="#b0202c" />)}
        <path d="M720,660V688H800" fill="none" stroke={RED} strokeWidth="8" /><Cross x={717} y={688} c={YEL} />
        <path d="M800,769H872V847H800ZM806,790V820H866V790M806,808H866" fill="none" stroke={SILK} strokeWidth="3" />
        <g fill={RED}><rect x="807" y="774" width="15" height="26" /><rect x="845" y="774" width="16" height="26" /><rect x="828" y="816" width="15" height="28" /></g>
        <Cross x={835} y={806} r={14} c={YEL} />

        {/* regulator */}
        <path d="M368,947H496V1017H368Z" fill="none" stroke={SILK} strokeWidth="5" />
        <g fill={RED}><rect x="369" y="897" width="33" height="46" /><rect x="417" y="897" width="32" height="46" /><rect x="462" y="897" width="33" height="46" /><rect x="393" y="1026" width="82" height="45" /></g>
        <g fill={HOT}><rect x="375" y="915" width="21" height="28" /><rect x="422" y="915" width="21" height="28" /><rect x="468" y="915" width="21" height="28" /><rect x="402" y="1026" width="63" height="23" /></g>
        <rect x="402" y="1018" width="63" height="9" fill={SILK} /><rect x="468" y="942" width="22" height="6" fill={SILK} />
        <path d="M418,1033H476V1061H418L409,1054V1041ZM432,1061V1040L420,1034M436,1058L460,1034M452,1060L475,1038" fill="none" stroke="#ff2d0c" strokeWidth="3" />
        <Cross x={433} y={982} r={22} c={YEL} />

        {/* usb connector */}
        <rect x="390" y="1210" width="154" height="86" fill="url(#dots)" /><rect x="390" y="1296" width="154" height="16" fill="url(#dots)" />
        <path d="M388,1312V1210H545V1312M402,1312H532M388,1312L377,1324H557L545,1312" fill="none" stroke={SILK} strokeWidth="3" />
        <rect x="436" y="1193" width="61" height="34" fill={RED} /><path d="M446,1193V1227M487,1193V1227" stroke="#ff2d0c" strokeWidth="5" /><path d="M459,1193V1227M473,1193V1227" stroke="#e0302a" strokeWidth="3" /><path d="M466,1188V1232" stroke={YEL} strokeWidth="2" />
        <path d={oct(445, 1267, 17, 17, 0.2)} fill={RED} /><path d={oct(487, 1267, 17, 17, 0.2)} fill={RED} /><path d="M410,1267H440" stroke={RED} strokeWidth="8" />
        {[408, 522].map((x) => <g key={x}><path d={oct(x, 1261, 17, 28)} fill="#000" /><path d={oct(x, 1261, 11, 23)} fill="#2fb07c" stroke="#56cfa0" strokeWidth="3" /><path d={`M${x - 5},1261H${x + 5}M${x},1256V1266`} stroke="#b0202c" strokeWidth="4" /></g>)}

        {/* reference designators */}
        <Label x={702} y={-539} t="GPS" s={23} len={44} /><Cross x={748} y={-552} />
        <Label x={427} y={-127} t="JP3" len={58} /><Cross x={424} y={-125} />
        <Label x={154} y={-46} t="U4" s={28} len={36} up /><Cross x={157} y={-44} r={12} />
        <Label x={98} y={130} t="GSM" s={23} len={46} /><Cross x={148} y={118} />
        <Label x={157} y={303} t="R6" len={44} up /><Cross x={160} y={308} />
        <Label x={280} y={332} t="C17" len={70} up />
        <Label x={610} y={82} t="R4" len={46} up /><Cross x={613} y={86} />
        <Label x={259} y={80} t="U5" s={24} len={36} up /><Cross x={270} y={134} r={7} />
        <g opacity=".75"><Label x={460} y={136} t="SJ1" s={36} len={70} /></g><Cross x={675} y={134} r={9} />
        <Label x={736} y={112} t="J3" s={34} len={52} up />
        <Label x={720} y={264} t="C1" s={30} len={32} up />
        <Label x={234} y={622} t="R14" len={72} up />
        <Label x={374} y={380} t="U2" s={26} len={30} up /><Cross x={374} y={376} r={10} />
        <Label x={508} y={548} t="J2" s={38} len={36} up /><Cross x={515} y={552} r={10} />
        <Label x={296} y={562} t="C" s={22} len={14} up />
        <Label x={545} y={672} t="C8" s={34} len={46} up /><Label x={640} y={740} t="L1" s={36} len={36} up />
        <Label x={684} y={622} t="2" s={26} len={20} up /><Label x={770} y={615} t="4" s={26} len={20} up />
        <Label x={33} y={822} t="JP2" len={56} up /><Cross x={35} y={830} r={13} />
        <Label x={486} y={840} t="JP4" len={62} /><Cross x={552} y={813} r={13} />
        <Label x={215} y={1051} t="C10" len={62} up /><Cross x={192} y={988} r={12} />
        <Label x={425} y={1094} t="IC2" len={52} /><Cross x={484} y={1068} />
        <Label x={533} y={912} t="C3" s={34} len={26} up /><Label x={552} y={992} t="R1" s={34} len={50} up />
        <Label x={430} y={1182} t="J5" s={26} len={20} /><Cross x={427} y={1182} />
        <Label x={888} y={810} t="Q1" s={34} len={42} up />
        <Label x={-496} y={1016} t="JP1" len={62} /><Cross x={-427} y={991} r={13} />
        <Label x={1211} y={848} t="R1" len={41} up /><Cross x={1187} y={808} r={13} />
      </g>
    </svg>
  );
}

const Fusion = () => (
  <svg width="15" height="15" viewBox="0 0 15 15"><rect width="15" height="15" rx="1.500" fill="#f7a21f" /><path d="M4.500 12.500V3H11.500V5.500H7.500V7H10.500V9.300H7.500V12.500Z" fill="#5b4b3a" /><path d="M4.500 12.500V9H7.500" fill="#999" /></svg>
);
const Chip = () => (
  <svg width="15" height="15" viewBox="0 0 15 15"><rect width="15" height="15" rx="1.500" fill="#1f8a4c" /><rect x="4.500" y="4" width="6" height="7" fill="#2c9a55" stroke="#e8ea5a" strokeWidth="1.800" /><path d="M3 5.500H12M3 9.500H12" stroke="#e0e35a" strokeDasharray="1.500 6" /></svg>
);

const tabs: [string, React.ReactNode, string, string][] = [
  ["MANUFACTURING", <Chip />, "pt-[7px]", "mt-[7px] tracking-[-0.7px]"],
  ["FUSION 360", <Fusion />, "pt-[18px]", "mt-[9px] tracking-[-0.4px]"],
  ["FUSION TEAM", <Fusion />, "pt-[18px]", "mt-[10px] tracking-[-0.7px]"],
];

function Canvas() {
  return (
    <div className="relative h-[874px] w-[1476px] shrink-0 bg-[#282828]">
      <Board />
      <div className="absolute top-[15px] right-1 flex flex-col gap-[27px]">
        {tabs.map(([t, icon, pad, txt]) => (
          <div key={t} className={"flex h-[135px] w-[25px] flex-col items-center bg-[#454545] " + pad}>
            {icon}
            <span className={"font-['Noto_Sans'] text-[11.800px] leading-[16px] font-semibold whitespace-nowrap text-[#f0f0f0] [writing-mode:vertical-rl] " + txt}>{t}</span>
          </div>
        ))}
      </div>
    </div>
  );
}

const menu: [string, string, string][] = [
  ["F", "ile", "w-[34px]"], ["E", "dit", "w-[36px]"], ["", "Draw", "w-[42px]"], ["V", "iew", "w-[40px]"], ["T", "ools", "w-[43px]"],
  ["L", "ibrary", "w-[51px]"], ["O", "ptions", "w-[56px]"], ["", "Window", "w-[57px]"], ["H", "elp", "w-[40px]"],
];

export default function App() {
  return (
    <div className="flex h-[1080px] w-[1920px] flex-col overflow-hidden bg-[#eee] font-['Liberation_Sans',sans-serif] text-[12px] text-[#3f3f3f]">
      <div className="flex h-[29px] shrink-0 items-center bg-[#1e98f4] pr-[8px] pl-[5px] text-white">
        <svg width="18" height="20" viewBox="0 0 18 20"><path d="M3 .5H17V15L13 19.500H3Z" fill="#eee" stroke="#aaa" /><path d="M17 15H13V19.500Z" fill="#555" /><rect y="3" width="18" height="9.500" rx="1" fill="#1f8a4c" /><text x="9" y="11" textAnchor="middle" fontSize="8.500" fontFamily="Noto Sans" fontWeight="600" fill="#fff" textLength="15" lengthAdjust="spacingAndGlyphs">BRD</text></svg>
        <svg width="12" height="12" viewBox="0 0 12 12" className="ml-[10px]"><path d="M7 0L12 5L10.500 5.500L8.500 8L8 10L5.300 7.600L1 12L0 11.500L4.300 6.700L2 4L4 3.500L6.500 1.500Z" fill="#fff" /></svg>
        <div className="-ml-[45px] flex-1 text-center font-['Noto_Sans'] text-[13px]"><span className="ml-[68px]">1 Board - /home/swaraj/Downloads/git/A9GSMPROJECT/GSM_GPS.brd - EAGLE 9.6.2 education</span></div>
        <svg width="60" height="12" viewBox="0 0 60 12" fill="none" stroke="#fff" strokeWidth="1.200"><path d="M1 3.500L6 8.500L11 3.500M30 1L35 6L30 11L25 6ZM49 1.500L58 10.500M58 1.500L49 10.500" /></svg>
      </div>
      <div className="flex h-[18px] shrink-0 pl-[10px] text-[12.200px] leading-[14px]">
        {menu.map(([k, rest, w]) => (
          <div key={rest} className={w}><span className="border-b border-[#3f3f3f]">{k}</span>{rest}</div>
        ))}
      </div>
      <TopToolbar />
      <LayerToolbar />
      <div className="flex min-h-0 flex-1">
        <Palette />
        <FilterPanel />
        <div className="flex min-w-0 flex-1 flex-col">
          <div className="flex h-[33px] shrink-0 items-center pb-[1px] pl-[7px]">
            <span className="w-[134px] pb-[2px] text-[12px] tracking-[-0.03px]">0.1 mm (212.5 32.4)</span>
            <div className="flex h-[26px] w-[1347px] items-center border border-[#0896d9] bg-white pr-[5px] pl-[6px]">
              <div className="h-[14px] w-px bg-black" />
              <div className="flex-1" />
              <Tri />
            </div>
          </div>
          <div className="flex">
            <Canvas />
            <div className="mt-1 ml-[5px] h-[869px] w-[6px] rounded-[2px] bg-[#808080]" />
          </div>
          <div className="mt-[5px] h-[6px] w-[1476px] shrink-0 rounded-[2px] bg-[#808080]" />
        </div>
      </div>
      <div className="flex h-[25px] shrink-0 items-center justify-between border-t border-[#808080] pr-[27px] pl-[2px] text-[12px] tracking-[-0.026px]">
        <span className="pb-[2px]">'/home/swaraj/Downloads/git/A9GSMPROJECT/GSM_GPS.brd' saved. Left-click &amp; drag to define group (or left-click to start defining a group polygon)</span>
        <svg width="20" height="20" viewBox="0 0 20 20"><path d="M15 0L0 9.500L8 12L5 20L20 10.500L12 8.500Z" fill="#19b34a" /></svg>
      </div>
    </div>
  );
}
